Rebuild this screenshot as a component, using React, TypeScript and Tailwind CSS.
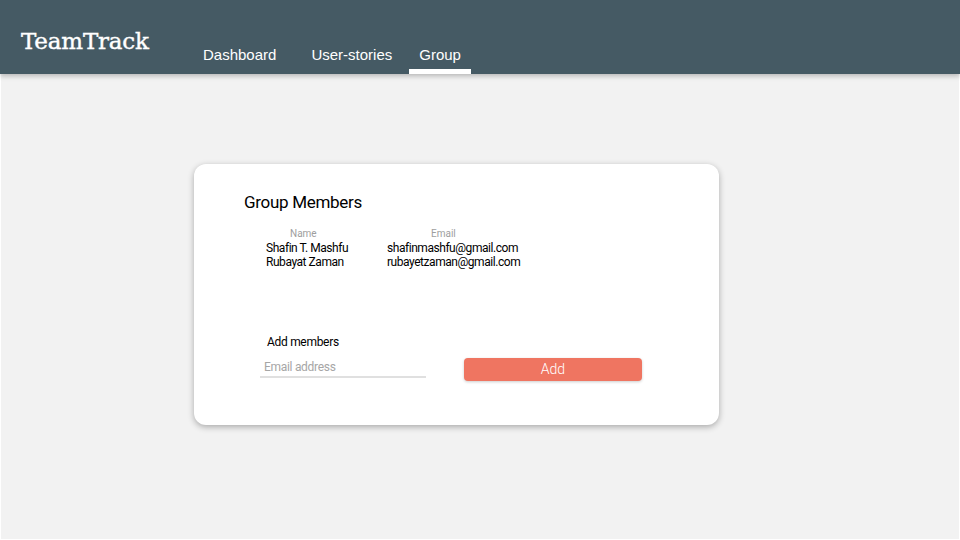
import React from 'react';

const members = [
  { name: 'Shafin T. Mashfu', email: 'shafinmashfu@gmail.com' },
  { name: 'Rubayat Zaman', email: 'rubayetzaman@gmail.com' },
];

const App: React.FC = () => {
  return (
    <div className="w-[960px] h-[540px] bg-white flex flex-col overflow-hidden">
      <header className="relative z-10 h-[74px] bg-[#455a64] flex shadow-[0_2px_5px_rgba(0,0,0,0.25)] shrink-0">
        <div
          className="pl-[21px] pt-[24px] text-white text-[23px] font-normal tracking-[-0.2px] w-[173px]"
          style={{ fontFamily: '"DejaVu Serif", serif', WebkitTextStroke: '0.4px white' }}
        >
          TeamTrack
        </div>
        <nav
          className="flex items-end ml-[21px] text-white text-[15px]"
          style={{ fontFamily: '"Liberation Sans", Arial, sans-serif' }}
        >
          <a className="h-[74px] pt-[44px] px-[9px] mr-[17px]">Dashboard</a>
          <a className="h-[74px] pt-[44px] px-[9px] mr-[8px]">User-stories</a>
          <a className="h-[74px] pt-[44px] px-[10px] border-b-[5px] border-white">Group</a>
        </nav>
      </header>

      <main className="flex-1 mx-[1px] mb-[1px] bg-[#f2f2f2]" style={{ fontFamily: 'Roboto, "Noto Sans", sans-serif' }}>
        <div className="ml-[193px] mt-[90px] w-[525px] h-[261px] bg-white rounded-[12px] shadow-[0_2px_6px_rgba(0,0,0,0.3)] pt-[27px] pl-[50px]">
          <h2 className="text-[17px] text-black leading-[22px] tracking-[-0.3px]">Group Members</h2>
          <div className="mt-[14px] grid grid-cols-[121px_auto] pl-[22px] text-[12px] leading-[14px] text-black tracking-[-0.45px]">
            <div className="text-[10px] text-[#9e9e9e] pl-[24px] leading-[14px] tracking-normal">Name</div>
            <div className="text-[10px] text-[#9e9e9e] pl-[44px] leading-[14px] tracking-normal">Email</div>
            {members.map((m) => (
              <React.Fragment key={m.email}>
                <div>{m.name}</div>
                <div>{m.email}</div>
              </React.Fragment>
            ))}
          </div>

          <div className="mt-[66px] pl-[23px] text-[12px] text-black leading-[14px] tracking-[-0.3px]">Add members</div>
          <div className="mt-[10px] pl-[16px] flex items-start">
            <div className="w-[166px] border-b-2 border-[#e0e0e0] pl-[4px] pb-[1px] text-[12px] leading-[16px] text-[#a6a6a6] tracking-[-0.3px]">
              Email address
            </div>
            <button className="ml-[38px] -mt-[1px] w-[178px] h-[23px] rounded-[4px] bg-[#ef7561] text-white text-[14px] font-light shadow-[0_1px_3px_rgba(0,0,0,0.2)]">
              Add
            </button>
          </div>
        </div>
      </main>
    </div>
  );
};

export default App;
